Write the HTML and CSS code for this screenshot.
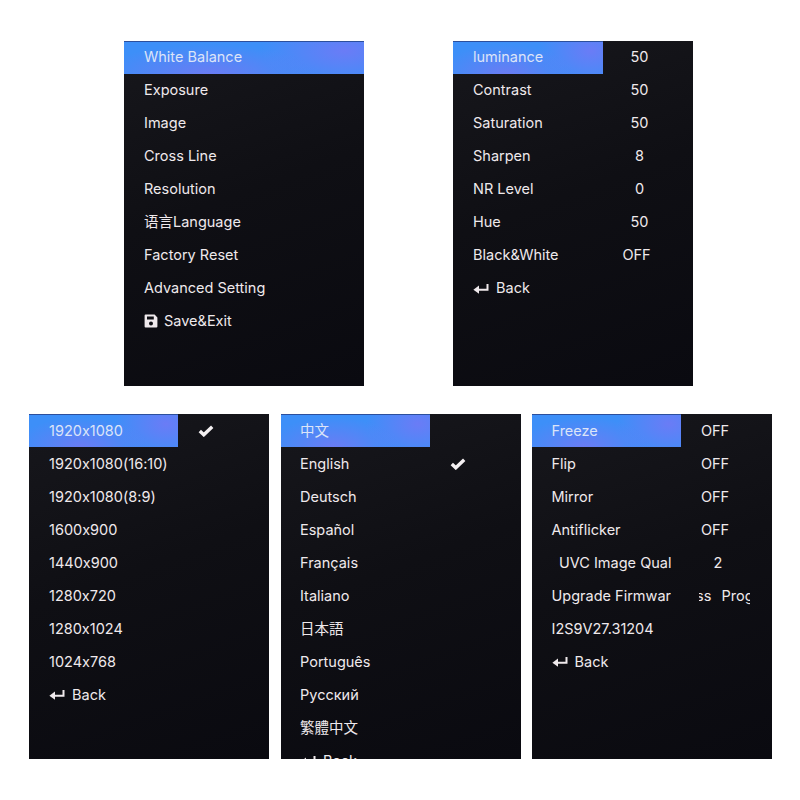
FILE: index.html
```html
<!DOCTYPE html>
<html lang="en">

<head>
    <meta charset="UTF-8">
    <meta name="viewport" content="width=device-width, initial-scale=1.0">
    <title>OSD Menus</title>
    <link rel="stylesheet" href="styles.css">
</head>

<body>
    <svg class="defs" width="0" height="0">
        <symbol id="ico-back" viewBox="0 0 16 11">
            <path d="M14.500 1v5.700H5" fill="none" stroke="currentColor" stroke-width="2" />
            <path d="M6 2.600v8.200L.4 6.700z" fill="currentColor" />
        </symbol>
        <symbol id="ico-check" viewBox="0 0 16 12">
            <path d="M1.800 6 5.800 9.800 14.200 1.800" fill="none" stroke="currentColor" stroke-width="3.400" />
        </symbol>
        <symbol id="ico-save" viewBox="0 0 14 14">
            <path fill="currentColor" fill-rule="evenodd"
                d="M1.600 .6h9l2.800 2.800v9a1 1 0 0 1-1 1H1.600a1 1 0 0 1-1-1V1.600a1 1 0 0 1 1-1zM3 2.400v3h6.800v-3zM7 7.600a2 2 0 1 0 0 4 2 2 0 0 0 0-4z" />
        </symbol>
    </svg>

    <div class="line line-top">
        <div class="panel panel-wide">
            <div class="row"><span class="label on">White Balance</span></div>
            <div class="row"><span class="label">Exposure</span></div>
            <div class="row"><span class="label">Image</span></div>
            <div class="row"><span class="label">Cross Line</span></div>
            <div class="row"><span class="label">Resolution</span></div>
            <div class="row"><span class="label">语言Language</span></div>
            <div class="row"><span class="label">Factory Reset</span></div>
            <div class="row"><span class="label">Advanced Setting</span></div>
            <div class="row"><span class="label"><svg class="ico ico-save"><use href="#ico-save" /></svg>Save&amp;Exit</span></div>
        </div>

        <div class="panel">
            <div class="row"><span class="label on">luminance</span><span class="val">50</span></div>
            <div class="row"><span class="label">Contrast</span><span class="val">50</span></div>
            <div class="row"><span class="label">Saturation</span><span class="val">50</span></div>
            <div class="row"><span class="label">Sharpen</span><span class="val">8</span></div>
            <div class="row"><span class="label">NR Level</span><span class="val">0</span></div>
            <div class="row"><span class="label">Hue</span><span class="val">50</span></div>
            <div class="row"><span class="label">Black&amp;White</span><span class="val val-off">OFF</span></div>
            <div class="row"><span class="label"><svg class="ico ico-back"><use href="#ico-back" /></svg>Back</span></div>
        </div>
    </div>

    <div class="line line-bottom">
        <div class="panel">
            <div class="row"><span class="label on">1920x1080</span><svg class="ico-check"><use href="#ico-check" /></svg></div>
            <div class="row"><span class="label"><span class="cut cut-res">1920x1080(16:10)</span></span></div>
            <div class="row"><span class="label">1920x1080(8:9)</span></div>
            <div class="row"><span class="label">1600x900</span></div>
            <div class="row"><span class="label">1440x900</span></div>
            <div class="row"><span class="label">1280x720</span></div>
            <div class="row"><span class="label">1280x1024</span></div>
            <div class="row"><span class="label">1024x768</span></div>
            <div class="row"><span class="label"><svg class="ico ico-back"><use href="#ico-back" /></svg>Back</span></div>
        </div>

        <div class="panel panel-inset">
            <div class="row"><span class="label on" lang="zh-CN">中文</span></div>
            <div class="row"><span class="label">English</span><svg class="ico-check"><use href="#ico-check" /></svg></div>
            <div class="row"><span class="label">Deutsch</span></div>
            <div class="row"><span class="label">Español</span></div>
            <div class="row"><span class="label">Français</span></div>
            <div class="row"><span class="label">Italiano</span></div>
            <div class="row"><span class="label" lang="ja">日本語</span></div>
            <div class="row"><span class="label">Português</span></div>
            <div class="row"><span class="label">Русский</span></div>
            <div class="row"><span class="label" lang="zh-TW">繁體中文</span></div>
            <div class="row"><span class="label"><svg class="ico ico-back"><use href="#ico-back" /></svg>Back</span></div>
        </div>

        <div class="panel panel-inset">
            <div class="row"><span class="label on">Freeze</span><span class="val val-off">OFF</span></div>
            <div class="row"><span class="label">Flip</span><span class="val val-off">OFF</span></div>
            <div class="row"><span class="label">Mirror</span><span class="val val-off">OFF</span></div>
            <div class="row"><span class="label">Antiflicker</span><span class="val val-off">OFF</span></div>
            <div class="row"><span class="label label-indent"><span class="cut">UVC Image Quality</span></span><span class="val">2</span></div>
            <div class="row"><span class="label"><span class="cut">Upgrade Firmware</span></span><span class="val val-clip">ss  Progress</span></div>
            <div class="row"><span class="label">I2S9V27.31204</span></div>
            <div class="row"><span class="label"><svg class="ico ico-back"><use href="#ico-back" /></svg>Back</span></div>
        </div>
    </div>
</body>

</html>
```
FILE: styles.css
```css
body {
    margin: 0;
    background-color: #fff;
    font-family: Inter, "Noto Sans CJK SC", sans-serif;
    font-size: 14.500px;
    line-height: 20px;
    font-feature-settings: "calt" 0;
    color: #efe9ec;
}

.defs {
    display: block;
    height: 0;
}

.line {
    display: flex;
}

.line-top {
    margin: 41px 0 0 124px;
    gap: 89px;
}

.line-bottom {
    margin: 28px 0 0 29px;
    gap: 11.500px;
}

.panel {
    width: 240px;
    height: 345px;
    overflow: hidden;
    background-color: #111116;
    background-image: linear-gradient(160deg, #17171c 0%, #0f0f14 45%, #0a0a10 100%);
}

.row {
    display: grid;
    grid-template-columns: 150px 70px;
    height: 33px;
    align-items: center;
}

.line-bottom .row {
    grid-template-columns: 149px 71px;
}

.panel-wide .row {
    grid-template-columns: 240px;
}

.label {
    display: flex;
    align-items: center;
    height: 100%;
    padding: 0 10px 1px 20px;
    box-sizing: border-box;
    overflow: hidden;
    white-space: nowrap;
}

.line-bottom .label {
    padding-bottom: 0;
}

.panel-inset .label {
    padding-left: 19.500px;
}

.label.on {
    color: #dce4f8;
    background-color: #3d8ff8;
    background-image:
        radial-gradient(ellipse 45% 90% at 35% 100%, #6a7cf4 0%, rgba(106, 124, 244, 0) 100%),
        radial-gradient(ellipse 35% 110% at 92% 30%, #6a7cf6 0%, rgba(106, 124, 246, 0) 100%);
    box-shadow: inset 0 1px 0 #2c4f9c;
}

.panel-inset .label-indent {
    padding-left: 27px;
}

.cut {
    flex: 1;
    min-width: 0;
    overflow: hidden;
}

.cut-res {
    flex: none;
    width: 118px;
}

.val {
    padding-left: 3px;
    padding-bottom: 1px;
    text-align: center;
    white-space: nowrap;
}

.line-bottom .val {
    padding-bottom: 0;
}

.val-off {
    padding-left: 0;
    padding-right: 3px;
}

.line-bottom .val-clip {
    width: 51px;
    margin-left: 18px;
    padding: 0;
    overflow: hidden;
    white-space: pre;
    word-spacing: 1px;
    text-align: left;
    text-indent: -3px;
}

.ico {
    flex: none;
    margin-right: 6px;
}

.ico-back {
    width: 16px;
    height: 11px;
    margin-right: 7px;
}

.ico-save {
    width: 14px;
    height: 14px;
}

.ico-check {
    width: 16px;
    height: 12px;
    margin-left: 20px;
    color: #f4f0f2;
}
```
